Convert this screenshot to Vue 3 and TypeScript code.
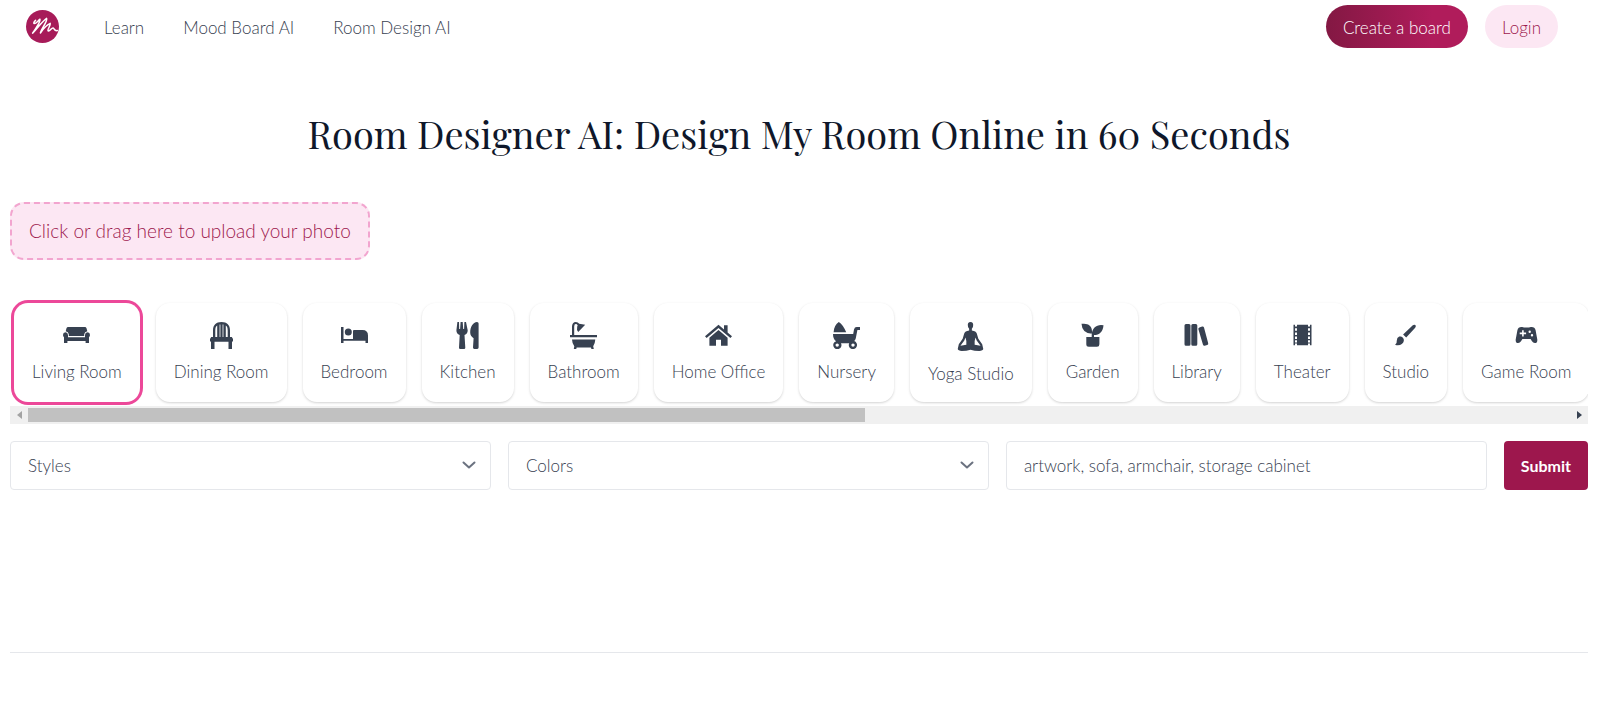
<script setup lang="ts">
import { ref } from 'vue'

interface Room {
  name: string
  path: string
  tall?: boolean
}

const navLinks: string[] = ['Learn', 'Mood Board AI', 'Room Design AI']

const rooms: Room[] = [
  {
    name: 'Living Room',
    path: 'M5.2 5H21.8Q23.2 5 23.6 6.4L24.3 9.2Q21.6 9.6 21.2 12.2V14H5.8V12.2Q5.4 9.6 2.7 9.2L3.4 6.4Q3.8 5 5.2 5ZM2.4 10.3Q4.9 10.4 5 13V15.2H22V13Q22.1 10.4 24.6 10.3Q27 10.6 27 13Q26.9 14.4 26 15.2V21H22.6V19H4.4V21H1V15.2Q0 14.4 0 13Q0 10.6 2.4 10.3Z'
  },
  {
    name: 'Dining Room',
    path: 'M5 15V8.5C5 3 8 0 13.5 0S22 3 22 8.5V15H19.7V8.5C19.7 6 19.1 4.5 17.8 3.6V15H15.4V2.4H14.6V15H12.4V2.4H11.6V15H9.2V3.6C7.9 4.5 7.3 6 7.3 8.5V15ZM3.2 15H23.8L25 17V19.5H24V27H20.5V19.8H6.5V27H3V19.5H2V17Z'
  },
  {
    name: 'Bedroom',
    path: 'M0 5H2.5V17H12V9Q12 8 13 8H21.5Q27 8 27 13.5V21H24.5V18.8H2.5V21H0ZM7.3 6.5A3.5 3.5 0 1 1 7.3 13.5A3.5 3.5 0 1 1 7.3 6.5Z'
  },
  {
    name: 'Kitchen',
    path: 'M3.4 0H5L5.2 7H6.1L6.6 0H8.7L9.2 7H10.1L10.4 0H12L13.7 8.3Q13.8 11.8 10.5 13.1L11.3 25.7Q11.3 27 10 27H6.2Q5 27 5 25.7L5.7 13.1Q2.3 11.8 2.4 8.3ZM23 0Q24.6 0 24.6 1.5V25.6Q24.6 27 23.2 27H20.3Q19 27 19 25.6L19.6 16.2Q16.2 14 16.2 10.4C16.2 5.3 19 0 23 0Z'
  },
  {
    name: 'Bathroom',
    path: 'M2 13V4.5C2 1.8 3.5 0 5.8 0Q8 0 9.2 1.8L15.2 2.8L8.2 10Q6.4 7.7 7.2 4.4L7.7 3.4Q7.1 2.1 5.8 2.1Q4.2 2.1 4.2 4.5V13H27V15.3H0V13ZM2 17.6H25.3Q25 22.2 23.2 24.2L23.8 27H21.4L21 25.4H6.7L6.2 27H3.8L4.3 24.2Q2.2 22.2 2 17.6Z'
  },
  {
    name: 'Home Office',
    path: 'M13.5 2.7L19 7.4V3.3H22.6V10.5L27 14.2L25.4 16L13.5 6L1.6 16L0 14.2ZM13.5 8L22.6 15.7V23.7H16V17.8H11V23.7H4.4V15.7Z'
  },
  {
    name: 'Nursery',
    path: 'M.6 10.2C1 5.2 2.8 1.8 5.8 0Q9.8 2.4 13.2 10.2ZM0 12H20.2L21 7.4Q21.6 5.1 23.7 5.1H27V8H24.4L22.8 16.2Q22.2 18.4 21.2 19.1A4.1 4.1 0 1 1 16.2 21.2H8A4.1 4.1 0 1 1 3.1 19.2C1 17.6 0 15.5 0 12ZM4.2 21.4A1.7 1.7 0 1 0 4.2 24.8A1.7 1.7 0 1 0 4.2 21.4ZM20 21.4A1.7 1.7 0 1 0 20 24.8A1.7 1.7 0 1 0 20 21.4Z'
  },
  {
    name: 'Yoga Studio',
    tall: true,
    path: 'M13.5 0C15.6 0 16.6 1.7 16.2 4C16.1 5.4 15.6 6.3 14.9 7V8.7Q19.3 9.3 20 11.8L21.6 17.2L25.6 23.1L26.7 28Q26.4 29.8 22.5 30Q17.5 30 13.5 28.7Q9.5 30 4.5 30Q.6 29.8 .3 28L1.4 23.1L5.4 17.2L7 11.8Q7.7 9.3 12.1 8.7V7C11.4 6.3 10.9 5.4 10.8 4C10.4 1.7 11.4 0 13.5 0ZM8.3 16L7.1 19.2L3.1 24.5L9.2 23.5Q9.8 20.2 8.3 16ZM18.7 16Q17.2 20.2 17.8 23.5L23.9 24.5L19.9 19.2Z'
  },
  {
    name: 'Garden',
    path: 'M2.5 1.8H5C9.7 1.8 13 4.5 13 9.2V11.8Q3 11.4 2.5 1.8ZM24.5 3.2C24 9.6 20.5 13 15 13V15H20.4V22.2Q20.4 24.7 18 24.7H9.8Q7.3 24.7 7.3 22.2V15H12.7V13C12.9 6.5 17 3 22 3Z'
  },
  {
    name: 'Library',
    path: 'M3 2H6Q7.5 2 7.5 3.5V22.2Q7.5 23.7 6 23.7H3Q1.5 23.7 1.5 22.2V3.5Q1.5 2 3 2ZM9.8 2H12.8Q14.3 2 14.3 3.5V22.2Q14.3 23.7 12.8 23.7H9.8Q8.3 23.7 8.3 22.2V3.5Q8.3 2 9.8 2ZM16.4 5.4L19.1 4.6Q20.6 4.3 21 5.6L25.2 21.3Q25.5 22.7 24.1 23.1L21.8 23.8Q20.4 24.1 20 22.7L15.4 7.2Q15 5.8 16.4 5.4Z'
  },
  {
    name: 'Theater',
    path: 'M4.5 2.7H6V4.5H8V2.7H19V4.5H21V2.7H22.5V23.3H21V21.5H19V23.3H8V21.5H6V23.3H4.5ZM6 6.2V8.7H8V6.2ZM6 10.4V12.9H8V10.4ZM6 14.6V17.1H8V14.6ZM6 18.3V20.4H8V18.3ZM19 6.2V8.7H21V6.2ZM19 10.4V12.9H21V10.4ZM19 14.6V17.1H21V14.6ZM19 18.3V20.4H21V18.3Z'
  },
  {
    name: 'Studio',
    path: 'M20.8 3.3Q22.2 2.1 23.4 3.1Q24.4 4.3 23.2 5.8L14.2 15.6L11.1 12.6ZM7.2 14.6C10 14.2 12.3 16.3 11.8 19C11.2 22.2 7.4 24.3 3.1 22.8Q5.1 21.6 4.8 18.6Q4.8 15.4 7.2 14.6Z'
  },
  {
    name: 'Game Room',
    path: 'M8.4 5Q10 4.8 11 5.5H16Q17 4.8 18.6 5Q21.8 5 22.6 8.2L24.3 17.5Q24.6 21 21.8 21Q20.1 21 19 19.2L17.6 17H9.4L8 19.2Q6.9 21 5.2 21Q2.4 21 2.7 17.5L4.4 8.2Q5.2 5 8.4 5ZM9.1 8.2V10.6H6.7V12.2H9.1V14.6H10.7V12.2H13.1V10.6H10.7V8.2ZM16.7 8.5A1.2 1.2 0 1 0 16.7 10.9A1.2 1.2 0 1 0 16.7 8.5ZM19 12A1.2 1.2 0 1 0 19 14.4A1.2 1.2 0 1 0 19 12Z'
  }
]

const selected = ref('Living Room')
const items = ref('')
const strip = ref<HTMLElement | null>(null)

function scrollStrip(step: number): void {
  strip.value?.scrollBy({ left: step, behavior: 'smooth' })
}
</script>

<template>
  <div class="page">
    <header class="topbar">
      <a class="logo" href="#" aria-label="Home">
        <svg viewBox="0 0 33 33" width="33" height="33" aria-hidden="true">
          <circle cx="16.5" cy="16.5" r="16.5" fill="#a71b59" />
          <path
            fill="none"
            stroke="#fff"
            stroke-width="1.5"
            stroke-linecap="round"
            stroke-linejoin="round"
            d="M9.6 10.2Q6.9 13 8.2 13.6C10 13.8 12 10.6 14 9.2C14.6 12.5 9.4 18.5 6.6 23.2C11 19 15.5 12 20.6 8.4C21.6 12 15.4 18.2 14.4 23C17.2 18.8 20.4 15.2 24.2 13.4C24.8 15.6 20.8 20 22.2 21C24.2 21.4 25.4 17.8 27 17.9C28.6 18.4 27.9 21.3 31.4 20.6"
          />
        </svg>
      </a>
      <nav class="links">
        <a v-for="link in navLinks" :key="link" href="#">{{ link }}</a>
      </nav>
      <div class="actions">
        <a class="pill create" href="#">Create a board</a>
        <a class="pill login" href="#">Login</a>
      </div>
    </header>

    <main>
      <h1>Room Designer AI: Design My Room Online in 60 Seconds</h1>

      <button class="upload" type="button">Click or drag here to upload your photo</button>

      <section class="rooms" aria-label="Room type">
        <div ref="strip" class="strip">
          <button
            v-for="room in rooms"
            :key="room.name"
            type="button"
            class="card"
            :class="{ active: room.name === selected }"
            :aria-pressed="room.name === selected"
            @click="selected = room.name"
          >
            <svg
              :class="{ tall: room.tall }"
              :viewBox="room.tall ? '0 0 27 30' : '0 0 27 27'"
              aria-hidden="true"
            >
              <path fill-rule="evenodd" :d="room.path" />
            </svg>
            <span>{{ room.name }}</span>
          </button>
        </div>
        <div class="scrollbar">
          <button type="button" class="arrow left" aria-label="Scroll left" @click="scrollStrip(-200)">
            <svg viewBox="0 0 5 8" width="5" height="8"><path d="M5 0V8L0 4Z" /></svg>
          </button>
          <div class="track"><div class="thumb"></div></div>
          <button type="button" class="arrow" aria-label="Scroll right" @click="scrollStrip(200)">
            <svg viewBox="0 0 5 8" width="5" height="8"><path d="M0 0V8L5 4Z" /></svg>
          </button>
        </div>
      </section>

      <form class="filters" @submit.prevent>
        <div class="field">
          <select aria-label="Styles"><option>Styles</option></select>
          <svg class="chevron" viewBox="0 0 14 8" aria-hidden="true"><path d="M1.5 1.5L7 6.5L12.5 1.5" /></svg>
        </div>
        <div class="field">
          <select aria-label="Colors"><option>Colors</option></select>
          <svg class="chevron" viewBox="0 0 14 8" aria-hidden="true"><path d="M1.5 1.5L7 6.5L12.5 1.5" /></svg>
        </div>
        <div class="field">
          <input v-model="items" type="text" aria-label="Items" placeholder="artwork, sofa, armchair, storage cabinet" />
        </div>
        <button class="submit" type="submit">Submit</button>
      </form>

      <hr />
    </main>
  </div>
</template>

<style>
body {
  margin: 0;
  background: #fff;
}
</style>

<style scoped>
.page,
.page * {
  box-sizing: border-box;
}

.page {
  font-family: Lato, "Liberation Sans", sans-serif;
  font-size: 17px;
  font-weight: 300;
  line-height: 27px;
  color: #374151;
}

button,
input,
select {
  font: inherit;
  color: inherit;
  margin: 0;
}

button {
  cursor: pointer;
}

a {
  color: inherit;
  text-decoration: none;
}

.topbar {
  display: flex;
  align-items: center;
  height: 53px;
  padding: 0 42px 0 26px;
}

.logo {
  display: flex;
}

.links {
  display: flex;
  gap: 39px;
  margin-left: 45px;
  padding-top: 2px;
}

.actions {
  display: flex;
  gap: 17px;
  margin-left: auto;
}

.pill {
  padding: 9px 17px 7px;
  border-radius: 22px;
}

.create {
  color: #fff;
  background: linear-gradient(90deg, #831843, #b01c5b 75%, #b01c5b);
}

.login {
  color: #9d174d;
  background: #fce7f3;
}

main {
  padding: 0 12px 0 10px;
}

h1 {
  margin: 55px 0 0;
  font-family: "Playfair Display", "Liberation Serif", serif;
  font-size: 38px;
  line-height: 52px;
  font-weight: 400;
  text-align: center;
  color: #0f172a;
}

.upload {
  display: block;
  margin-top: 42px;
  padding: 14px 17px;
  border: 2px dashed #f2a5cf;
  border-radius: 14px;
  background: #fce7f3;
  color: #9d174d;
  font-size: 19px;
  line-height: 26px;
}

.rooms {
  margin-top: 40px;
}

.strip {
  display: flex;
  gap: 16px;
  padding: 3px 4px 4px;
  overflow: hidden;
}

.card {
  display: flex;
  flex: none;
  flex-direction: column;
  align-items: center;
  gap: 9px;
  height: 99px;
  padding: 19px 18px 0;
  border: 0;
  border-radius: 14px;
  background: #fff;
  box-shadow: 0 1px 3px rgba(0, 0, 0, 0.12), 0 1px 2px rgba(0, 0, 0, 0.06);
}

.card.active {
  box-shadow: 0 0 0 3px #ec4899;
}

.card svg {
  width: 27px;
  height: 27px;
  fill: #374151;
}

.card svg.tall {
  height: 29px;
}

.scrollbar {
  display: flex;
  height: 18px;
  background: #f0f0f0;
}

.arrow {
  display: flex;
  align-items: center;
  justify-content: center;
  width: 18px;
  padding: 0;
  border: 0;
  background: none;
  fill: #374151;
}

.arrow.left {
  fill: #a3a3a3;
}

.track {
  flex: 1;
  padding: 2px 0;
}

.thumb {
  width: 54.3%;
  height: 100%;
  background: #c1c1c1;
}

.filters {
  display: grid;
  grid-template-columns: 1fr 1fr 1fr auto;
  gap: 17px;
  margin-top: 17px;
}

.field {
  position: relative;
}

select,
input {
  display: block;
  width: 100%;
  height: 49px;
  padding: 0 17px;
  border: 1px solid #e5e7eb;
  border-radius: 4px;
  background: #fff;
  appearance: none;
}

input::placeholder {
  color: #374151;
  opacity: 1;
}

.chevron {
  position: absolute;
  top: 20px;
  right: 15px;
  width: 14px;
  height: 8px;
  fill: none;
  stroke: #6b7280;
  stroke-width: 2;
  stroke-linecap: round;
  stroke-linejoin: round;
  pointer-events: none;
}

.submit {
  padding: 0 17px;
  border: 0;
  border-radius: 4px;
  background: #9d174d;
  color: #fff;
  font-size: 16px;
  font-weight: 700;
}

hr {
  margin: 162px 0 0;
  border: 0;
  border-top: 1px solid #e5e7eb;
}
</style>
